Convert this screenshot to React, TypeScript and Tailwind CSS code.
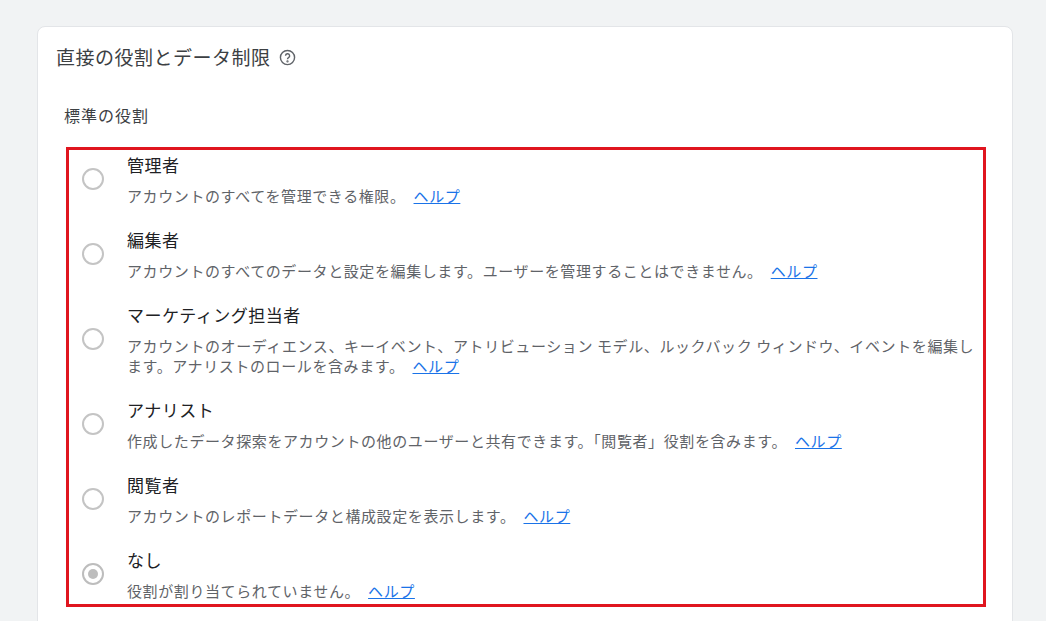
const F = { fontFamily: '"Noto Sans CJK JP", "Noto Sans", sans-serif' };
const rows: { t: string; d: string; sel?: boolean }[] = [
  { t: "管理者", d: "アカウントのすべてを管理できる権限。" },
  { t: "編集者", d: "アカウントのすべてのデータと設定を編集します。ユーザーを管理することはできません。" },
  { t: "マーケティング担当者", d: "アカウントのオーディエンス、キーイベント、アトリビューション モデル、ルックバック ウィンドウ、イベントを編集します。アナリストのロールを含みます。" },
  { t: "アナリスト", d: "作成したデータ探索をアカウントの他のユーザーと共有できます。「閲覧者」役割を含みます。" },
  { t: "閲覧者", d: "アカウントのレポートデータと構成設定を表示します。" },
  { t: "なし", d: "役割が割り当てられていません。", sel: true },
];
export default function App() {
  return (
    <div style={F} className="w-[1046px] h-[621px] overflow-hidden bg-[#f1f3f4] pt-[26px] pl-[37px]">
      <div className="w-[976px] h-[620px] bg-white rounded-t-[8px] border border-[#e3e5e8] pl-[18px] pt-[15px]">
        <div className="flex items-center text-[19px] text-[#3c4043] leading-[30px] tracking-[0.5px]">
          直接の役割とデータ制限
          <svg width="17" height="17" viewBox="0 0 24 24" className="ml-[8px]" fill="none" stroke="#5f6368" strokeWidth="2">
            <circle cx="12" cy="12" r="10" />
            <path d="M9.2 9.5a2.9 2.9 0 1 1 4.2 2.6c-.9.5-1.4 1.1-1.4 2.2" />
            <circle cx="12" cy="17.5" r="0.6" fill="#5f6368" />
          </svg>
        </div>
        <div className="mt-[30px] ml-[8px] text-[16px] tracking-[1px] text-[#3c4043] leading-[26px]">標準の役割</div>
        <div className="mt-[19px] ml-[10px] w-[920px] border-[3px] border-[#e0151f] pt-[2px] pb-[3px]">
          {rows.map((r) => (
            <div key={r.t} className="flex items-center mb-[21px] last:mb-0">
              <div className="w-[58px] flex justify-center shrink-0 pr-[17px] pl-[6px]">
                <div className={`w-[22px] h-[22px] rounded-full border-2 flex items-center justify-center ${r.sel ? "border-[#bdbdbd]" : "border-[#c4c4c4]"}`}>
                  {r.sel && <div className="w-[10px] h-[10px] rounded-full bg-[#bdbdbd]" />}
                </div>
              </div>
              <div className="pr-[4px]">
                <div className="text-[17px] leading-[26px] text-[#202124] tracking-[0.5px]">{r.t}</div>
                <div className="mt-[8px] text-[15px] leading-[20px] text-[#5f6368] tracking-[0.6px]">
                  {r.d} <span className="ml-[4px] text-[#1a73e8] underline">ヘルプ</span>
                </div>
              </div>
            </div>
          ))}
        </div>
      </div>
    </div>
  );
}
